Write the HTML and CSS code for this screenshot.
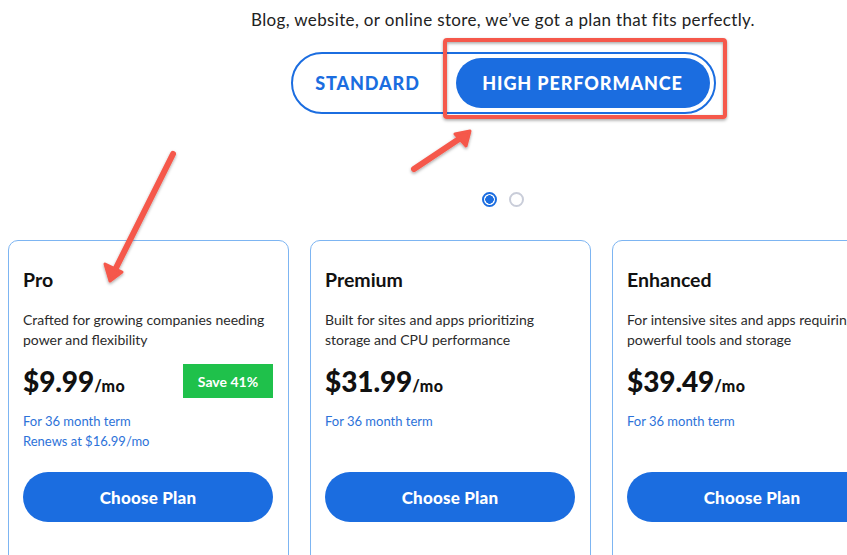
FILE: index.html
```html
<!DOCTYPE html>
<html>
<head>
<meta charset="utf-8">
<link rel="stylesheet" href="styles.css">
</head>
<body>
<div class="page">
  <div class="hero">
    <p class="subtitle">Blog, website, or online store, we’ve got a plan that fits perfectly.</p>
    <div class="toggle">
      <button class="tab">STANDARD</button>
      <button class="tab active">HIGH PERFORMANCE</button>
    </div>
    <div class="dots">
      <span class="dot on"></span>
      <span class="dot"></span>
    </div>
  </div>
  <div class="cards">
    <div class="card">
      <h3 class="title">Pro</h3>
      <p class="desc">Crafted for growing companies needing power and flexibility</p>
      <div class="price-row">
        <div class="price">$9.99<span class="per">/mo</span></div>
        <div class="save">Save 41%</div>
      </div>
      <p class="term">For 36 month term<br>Renews at $16.99/mo</p>
      <button class="choose">Choose Plan</button>
    </div>
    <div class="card">
      <h3 class="title">Premium</h3>
      <p class="desc">Built for sites and apps prioritizing storage and CPU performance</p>
      <div class="price-row">
        <div class="price">$31.99<span class="per">/mo</span></div>
      </div>
      <p class="term">For 36 month term<br>&nbsp;</p>
      <button class="choose">Choose Plan</button>
    </div>
    <div class="card">
      <h3 class="title">Enhanced</h3>
      <p class="desc">For intensive sites and apps requiring powerful tools and storage</p>
      <div class="price-row">
        <div class="price">$39.49<span class="per">/mo</span></div>
      </div>
      <p class="term">For 36 month term<br>&nbsp;</p>
      <button class="choose">Choose Plan</button>
    </div>
  </div>
</div>
<svg class="annot" width="847" height="555" viewBox="0 0 847 555">
  <defs>
    <filter id="sh" x="-20%" y="-20%" width="140%" height="140%">
      <feDropShadow dx="0" dy="1.5" stdDeviation="1.5" flood-color="#000" flood-opacity="0.35"/>
    </filter>
  </defs>
  <g filter="url(#sh)" stroke="#f5584b" fill="none" stroke-linecap="round" stroke-linejoin="round">
    <rect x="445" y="40" width="280" height="77" rx="2" stroke-width="4"/>
    <line x1="173" y1="154" x2="114" y2="272" stroke-width="6"/>
    <polygon points="110,281 105,264 122,272" fill="#f5584b" stroke-width="3"/>
    <line x1="414" y1="169" x2="462" y2="137" stroke-width="6"/>
    <polygon points="470,131 455,134 466,146" fill="#f5584b" stroke-width="3"/>
  </g>
</svg>
</body>
</html>
```
FILE: styles.css
```css
html, body {
  margin: 0;
  padding: 0;
  background: #ffffff;
  overflow: hidden;
}
body {
  width: 847px;
  height: 555px;
  position: relative;
  font-family: Lato, "Liberation Sans", sans-serif;
  color: #1a1a1a;
}
.page {
  width: 998px;
  padding-left: 8px;
  box-sizing: border-box;
}
.hero {
  display: flex;
  flex-direction: column;
  align-items: center;
}
.subtitle {
  margin: 10px 0 0;
  font-size: 17px;
  line-height: 20px;
  color: #222;
  letter-spacing: 0.35px;
  white-space: nowrap;
}
.toggle {
  margin-top: 22px;
  width: 425px;
  height: 62px;
  box-sizing: border-box;
  border: 2px solid #1b6de0;
  border-radius: 31px;
  padding: 4px;
  display: flex;
  align-items: stretch;
}
.tab {
  border: none;
  background: transparent;
  font-family: Lato, "Liberation Sans", sans-serif;
  font-weight: 900;
  font-size: 18px;
  letter-spacing: 0.9px;
  color: #1b6de0;
  padding: 0;
  cursor: pointer;
}
.tab:first-child {
  flex: 1;
  padding-right: 17px;
}
.tab.active {
  width: 254px;
  background: #1b6de0;
  color: #ffffff;
  border-radius: 25px;
}
.dots {
  margin-top: 78px;
  display: flex;
  gap: 12px;
}
.dot {
  width: 15px;
  height: 15px;
  box-sizing: border-box;
  border-radius: 50%;
  border: 2px solid #c9cdd9;
  display: block;
}
.dot.on {
  border-color: #1b6de0;
  background: radial-gradient(circle, #1b6de0 0 4px, #fff 4.5px);
}
.cards {
  margin-top: 33px;
  display: flex;
  gap: 21px;
}
.card {
  width: 281px;
  flex: none;
  height: 340px;
  box-sizing: border-box;
  border: 1px solid #7db5f2;
  border-radius: 10px;
  padding: 26px 14px 0;
}
.title {
  margin: 0;
  font-size: 19.5px;
  font-weight: 700;
  line-height: 26px;
  color: #111;
}
.desc {
  margin: 17px 0 0;
  font-size: 14px;
  line-height: 20px;
  color: #2b2b2b;
}
.price-row {
  margin-top: 14px;
  height: 34px;
  display: flex;
  justify-content: space-between;
  align-items: center;
  padding-right: 1px;
}
.price {
  font-size: 28px;
  font-weight: 900;
  color: #111;
  letter-spacing: -0.1px;
}
.per {
  font-size: 16px;
  font-weight: 900;
  letter-spacing: 0.4px;
}
.save {
  width: 90px;
  height: 34px;
  background: #1fc14b;
  color: #fff;
  font-size: 14px;
  font-weight: 700;
  display: flex;
  align-items: center;
  justify-content: center;
}
.term {
  margin: 13px 0 0;
  font-size: 13px;
  line-height: 20px;
  color: #2d72d9;
}
.choose {
  margin-top: 21px;
  width: 250px;
  height: 50px;
  border: none;
  border-radius: 25px;
  background: #1b6de0;
  color: #fff;
  font-family: Lato, "Liberation Sans", sans-serif;
  font-size: 17px;
  font-weight: 900;
  letter-spacing: 0.2px;
}
.annot {
  position: absolute;
  left: 0;
  top: 0;
  pointer-events: none;
}
```
